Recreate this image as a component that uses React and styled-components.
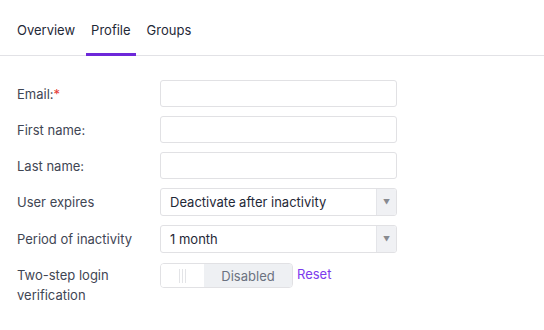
import React from 'react';
import styled, { createGlobalStyle } from 'styled-components';

const GlobalStyle = createGlobalStyle`
  body {
    margin: 0;
    background: #ffffff;
    font-family: Inter, "Noto Sans", sans-serif;
    font-size: 13px;
    color: #374151;
  }
`;

const TabBar = styled.div`
  display: flex;
  padding-left: 12px;
  border-bottom: 1px solid #e2e2e6;
`;

const Tab = styled.div`
  padding: 21px 5px 14px;
  margin-right: 6px;
  line-height: 18px;
  color: #1f2937;
  border-bottom: 3px solid ${p => (p.active ? '#6d28d9' : 'transparent')};
  margin-bottom: -1px;
`;

const Form = styled.div`
  display: grid;
  grid-template-columns: 143px 237px;
  row-gap: 9px;
  padding: 24px 0 0 17px;
`;

const Label = styled.div`
  display: flex;
  align-items: ${p => (p.top ? 'flex-start' : 'center')};
  padding-top: ${p => (p.top ? '3px' : '0')};
  line-height: 20px;
  color: #3f4654;
`;

const Star = styled.span`
  color: #e53935;
`;

const Input = styled.div`
  height: 25px;
  border: 1px solid #e1e1e4;
  border-radius: 3px;
  background: #fff;
`;

const Select = styled.div`
  display: flex;
  height: 26px;
  border: 1px solid #e1e1e4;
  border-radius: 3px;
  overflow: hidden;
`;

const SelectText = styled.div`
  flex: 1;
  display: flex;
  align-items: center;
  padding-left: 9px;
  color: #1f2937;
`;

const Arrow = styled.div`
  width: 19px;
  display: flex;
  align-items: center;
  justify-content: center;
  background: #f0f1f4;
  border-left: 1px solid #e4e5e9;
  color: #888a90;
  font-size: 7px;
`;

const ToggleRow = styled.div`
  display: flex;
  align-items: flex-start;
  gap: 4px;
  padding-top: 1px;
`;

const Toggle = styled.div`
  display: flex;
  width: 131px;
  height: 23px;
  border: 1px solid #e1e1e4;
  border-radius: 4px;
  overflow: hidden;
`;

const Knob = styled.div`
  width: 43px;
  display: flex;
  align-items: center;
  justify-content: center;
  gap: 2px;
  background: #fff;
`;

const Grip = styled.span`
  width: 1px;
  height: 14px;
  background: #e3e4e7;
`;

const ToggleText = styled.div`
  flex: 1;
  display: flex;
  align-items: center;
  justify-content: center;
  background: #eef0f3;
  color: #6b7280;
`;

const Reset = styled.span`
  color: #7c3aed;
  line-height: 20px;
  margin-top: 1px;
`;

export default function App() {
  return (
    <>
      <GlobalStyle />
      <TabBar>
        <Tab>Overview</Tab>
        <Tab active>Profile</Tab>
        <Tab>Groups</Tab>
      </TabBar>
      <Form>
        <Label>Email:<Star>*</Star></Label>
        <Input />
        <Label>First name:</Label>
        <Input />
        <Label>Last name:</Label>
        <Input />
        <Label>User expires</Label>
        <Select>
          <SelectText>Deactivate after inactivity</SelectText>
          <Arrow>▼</Arrow>
        </Select>
        <Label>Period of inactivity</Label>
        <Select>
          <SelectText>1 month</SelectText>
          <Arrow>▼</Arrow>
        </Select>
        <Label top>Two-step login<br />verification</Label>
        <ToggleRow>
          <Toggle>
            <Knob><Grip /><Grip /><Grip /></Knob>
            <ToggleText>Disabled</ToggleText>
          </Toggle>
          <Reset>Reset</Reset>
        </ToggleRow>
      </Form>
    </>
  );
}
